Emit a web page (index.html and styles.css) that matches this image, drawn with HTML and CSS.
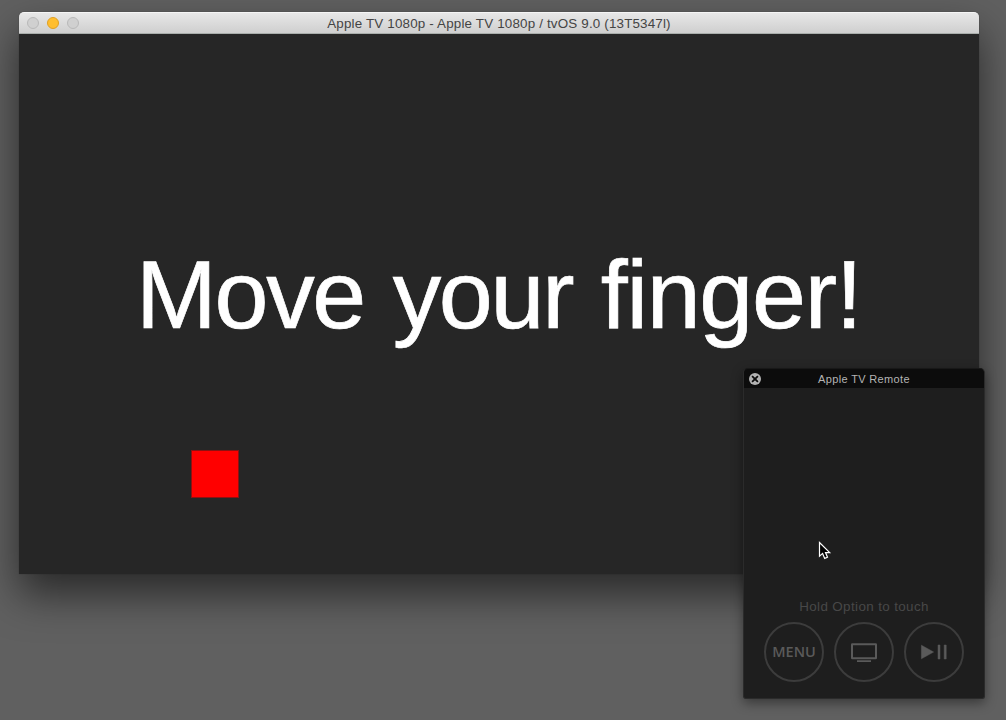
FILE: index.html
```html
<!DOCTYPE html>
<html lang="en">
<head>
<meta charset="utf-8">
<title>Apple TV Simulator</title>
<link rel="stylesheet" href="styles.css">
</head>
<body>
<main class="desktop">
  <section class="window simulator">
    <header class="titlebar">
      <div class="lights"><i class="light"></i><i class="light minimize"></i><i class="light"></i></div>
      <span class="title">Apple TV 1080p - Apple TV 1080p / tvOS 9.0 (13T5347l)</span>
    </header>
    <div class="screen">
      <h1 class="headline">Move your <span class="loose">finger!</span></h1>
      <div class="square"></div>
    </div>
  </section>
  <section class="window remote">
    <header class="remote-bar">
      <svg class="close" width="12" height="12" viewBox="0 0 12 12"><circle cx="6" cy="6" r="6" fill="#b2b2b2"/><path d="M3.1 3.1l5.8 5.8M8.9 3.1L3.1 8.9" stroke="#0c0c0c" stroke-width="1.8"/></svg>
      <span class="remote-title">Apple TV Remote</span>
    </header>
    <div class="pad">
      <p class="hint">Hold Option to touch</p>
      <div class="buttons">
        <div class="button"><span class="menu">MENU</span></div>
        <div class="button"><svg width="60" height="60" viewBox="0 0 60 60"><rect x="18" y="22.3" width="24" height="14" rx=".3" fill="none" stroke="#5a5a5a" stroke-width="2"/><path d="M23 39.2h14" stroke="#5a5a5a" stroke-width="1.8"/></svg></div>
        <div class="button"><svg width="60" height="60" viewBox="0 0 60 60" fill="#5a5a5a"><path d="M17.4 23.2l12.2 6.8-12.2 6.8zM34 23h2v14h-2zM40.2 23h2v14h-2z" stroke="#5a5a5a" stroke-width=".5" stroke-linejoin="round"/></svg></div>
      </div>
    </div>
  </section>
  <svg class="cursor" width="14" height="21" viewBox="0 0 14 21"><path d="M1.5 1.5v13.7l3.1-2.8 2.1 5 2.8-1.2-2-4.6h4.2z" fill="#000" stroke="#fff" stroke-width="1.2"/></svg>
</main>
</body>
</html>
```
FILE: styles.css
```css
* { box-sizing: border-box; }
body { margin: 0; font-family: "Liberation Sans", Arial, sans-serif; }
.desktop { position: relative; width: 1006px; height: 720px; overflow: hidden; background: #606060; }
.window { position: absolute; display: flex; flex-direction: column; }
.simulator { left: 19px; top: 12px; width: 960px; height: 562px; border-radius: 5px 5px 0 0; box-shadow: 0 20px 42px rgba(0,0,0,.57), 0 0 1px rgba(0,0,0,.5); }
.titlebar { display: grid; grid-template-columns: 60px 1fr 60px; align-items: center; height: 22px; border-radius: 5px 5px 0 0; background: linear-gradient(#e7e7e7, #cfcfcf); border-top: 1px solid #f5f5f5; border-bottom: 1px solid #a9aeab; }
.lights { display: flex; gap: 8px; padding-left: 8px; }
.light { width: 12px; height: 12px; border-radius: 50%; background: #d0d0d0; border: 1px solid #b9b9b9; }
.minimize { background: #ffbe2f; border-color: #e0a023; }
.title { padding-top: 2px; text-align: center; font-size: 13.4px; line-height: 18px; letter-spacing: .17px; color: #444; white-space: nowrap; }
.screen { flex: 1; background: #262626; }
.headline { margin: 0; padding: 206px 0 0 117px; font-size: 97px; font-weight: 400; line-height: 110px; letter-spacing: -2.3px; word-spacing: 4px; font-variant-ligatures: none; color: #fff; -webkit-text-stroke: .7px #fff; white-space: nowrap; }
.loose { letter-spacing: -1.3px; }
.square { width: 48px; height: 48px; margin: 100px 0 0 172px; background: #f00; border: 1px solid #8e1111; }
.remote { left: 743px; top: 368px; width: 242px; height: 331px; border: 1px solid #2b2b2b; border-top-color: #181818; border-radius: 5px 5px 3px 3px; background: #1e1e1e; box-shadow: 0 4px 12px rgba(0,0,0,.42); overflow: hidden; }
.remote-bar { display: grid; grid-template-columns: 20px 1fr 20px; align-items: center; height: 19px; background: #0c0c0c; }
.close { margin: 1px 0 0 5px; }
.remote-title { padding-top: 2px; text-align: center; font-size: 11px; line-height: 17px; letter-spacing: .35px; color: #b4b4b4; }
.pad { flex: 1; display: flex; flex-direction: column; justify-content: flex-end; padding-bottom: 16px; }
.hint { margin: 0 0 7px; text-align: center; font-size: 13.4px; line-height: 16px; letter-spacing: .38px; color: #484848; }
.buttons { display: flex; justify-content: center; gap: 10px; }
.button { display: flex; align-items: center; justify-content: center; width: 60px; height: 60px; border: 2px solid #3c3c3c; border-radius: 50%; }
.button svg { flex: none; }
.menu { padding-bottom: 1px; font-family: "Open Sans", sans-serif; font-size: 14.5px; font-weight: 600; line-height: 20px; color: #5a5a5a; }
.cursor { position: absolute; left: 818px; top: 541px; }
```
